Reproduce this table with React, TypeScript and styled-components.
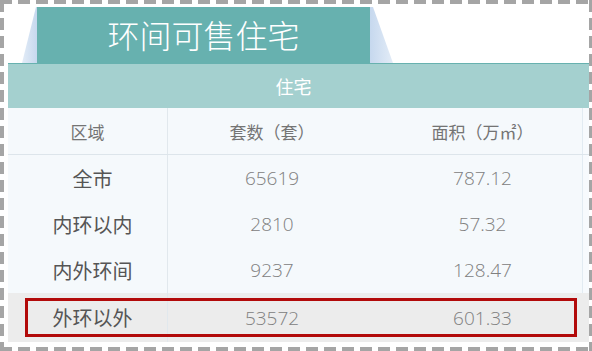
import React from "react";
import styled, { createGlobalStyle } from "styled-components";

const GlobalStyle = createGlobalStyle`
  html, body {
    margin: 0;
    padding: 0;
    background: #ffffff;
  }
  body {
    font-family: "Noto Sans CJK SC", "Noto Sans", sans-serif;
  }
`;

const DASH = "#a5a5a5";

const Frame = styled.div`
  box-sizing: border-box;
  width: 592px;
  height: 351px;
  padding: 7px 3px 0 8px;
  display: flex;
  flex-direction: column;
  background:
    repeating-linear-gradient(90deg, ${DASH} 0 12px, transparent 12px 18px) left top / 100% 4px no-repeat,
    repeating-linear-gradient(90deg, ${DASH} 0 12px, transparent 12px 18px) left bottom / 100% 4px no-repeat,
    repeating-linear-gradient(180deg, ${DASH} 0 12px, transparent 12px 18px) left top / 4px 100% no-repeat,
    repeating-linear-gradient(180deg, ${DASH} 0 12px, transparent 12px 18px) right top / 3px 100% no-repeat,
    #ffffff;
`;

const TitleBar = styled.div`
  height: 56px;
  display: flex;
  padding-left: 14px;
`;

const Tab = styled.div`
  width: 333px;
  background: #67b1af;
  color: #ffffff;
  font-size: 32px;
  font-weight: 300;
  display: flex;
  align-items: center;
  justify-content: center;
  padding-bottom: 2px;
  box-sizing: border-box;
`;

const Band = styled.div`
  height: 44px;
  border-top: 1px solid #67b1af;
  background: #a4d0cf;
  color: #ffffff;
  font-size: 18px;
  display: flex;
  align-items: center;
  justify-content: center;
  padding-right: 10px;
`;

const Table = styled.div`
  display: flex;
  flex-direction: column;
  background: #f5f9fc;
  box-shadow: inset -6px 0 0 #f7fafd, inset -7px 0 0 #e2ebf2;
`;

const Row = styled.div<{ $height: number; $head?: boolean; $mark?: boolean }>`
  position: relative;
  height: ${({ $height }) => $height}px;
  display: grid;
  grid-template-columns: 160px 208px 1fr;
  box-sizing: border-box;
  border-bottom: ${({ $head }) => ($head ? "1px solid #dde5eb" : "none")};
  background: ${({ $mark }) => ($mark ? "#ececec" : "transparent")};

  &::after {
    content: "";
    display: ${({ $mark }) => ($mark ? "block" : "none")};
    position: absolute;
    left: 17px;
    right: 12px;
    top: 5px;
    bottom: 5px;
    border: 3px solid #b20a0a;
  }
`;

const Cell = styled.div<{ $kind: "head" | "label" | "num"; $first?: boolean }>`
  display: flex;
  align-items: center;
  justify-content: center;
  border-right: ${({ $first }) => ($first ? "1px solid #e1e8ed" : "none")};
  padding-left: ${({ $kind }) => ($kind === "label" ? "10px" : "0")};
  font-family: ${({ $kind }) =>
    $kind === "num"
      ? '"Open Sans", "Noto Sans", sans-serif'
      : '"Noto Sans CJK SC", "Noto Sans", sans-serif'};
  font-size: ${({ $kind }) =>
    $kind === "head" ? "17px" : $kind === "num" ? "19px" : "20px"};
  font-weight: ${({ $kind }) => ($kind === "num" ? 300 : 400)};
  color: ${({ $kind }) =>
    $kind === "head" ? "#747474" : $kind === "num" ? "#808080" : "#555555"};
`;

const rows = [
  { area: "全市", units: "65619", size: "787.12" },
  { area: "内环以内", units: "2810", size: "57.32" },
  { area: "内外环间", units: "9237", size: "128.47" },
  { area: "外环以外", units: "53572", size: "601.33", mark: true },
];

export default function App() {
  return (
    <>
      <GlobalStyle />
      <Frame>
        <TitleBar>
          <svg width="15" height="56" viewBox="0 0 15 56">
            <defs>
              <linearGradient id="wedgeL" x1="0" y1="0" x2="1" y2="0">
                <stop offset="0" stopColor="#e3ecf7" />
                <stop offset="1" stopColor="#c6d8ee" />
              </linearGradient>
            </defs>
            <polygon points="14,0 15,0 15,56 0,56" fill="url(#wedgeL)" />
          </svg>
          <Tab>环间可售住宅</Tab>
          <svg width="24" height="56" viewBox="0 0 24 56">
            <defs>
              <linearGradient id="wedgeR" x1="0" y1="0" x2="1" y2="0">
                <stop offset="0" stopColor="#c6d8ee" />
                <stop offset="1" stopColor="#e3ecf7" />
              </linearGradient>
            </defs>
            <polygon points="0,0 3,0 23,56 0,56" fill="url(#wedgeR)" />
          </svg>
        </TitleBar>
        <Band>住宅</Band>
        <Table>
          <Row $height={47} $head>
            <Cell $kind="head" $first>区域</Cell>
            <Cell $kind="head">套数（套）</Cell>
            <Cell $kind="head">面积（万㎡）</Cell>
          </Row>
          {rows.map((r) => (
            <Row key={r.area} $height={r.mark ? 49 : 46} $mark={r.mark}>
              <Cell $kind="label" $first>{r.area}</Cell>
              <Cell $kind="num">{r.units}</Cell>
              <Cell $kind="num">{r.size}</Cell>
            </Row>
          ))}
        </Table>
      </Frame>
    </>
  );
}
